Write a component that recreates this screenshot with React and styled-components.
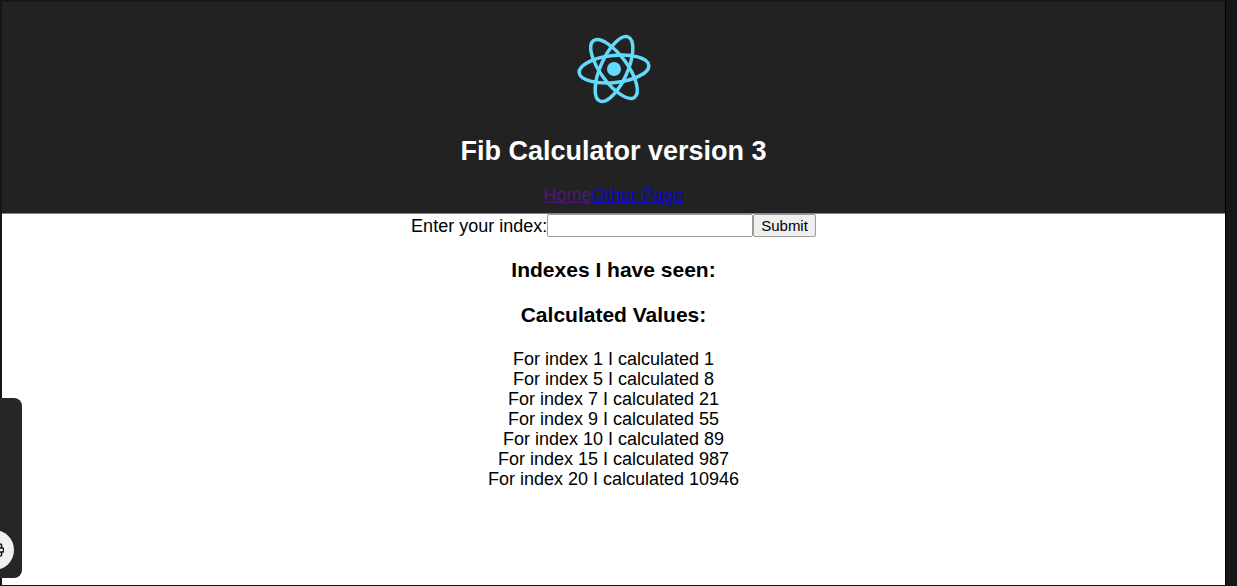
import React, { useState } from 'react';
import styled, { createGlobalStyle } from 'styled-components';

const GlobalStyle = createGlobalStyle`
  *, *::before, *::after { box-sizing: border-box; }
  body {
    margin: 0;
    font-family: "Liberation Sans", Arial, sans-serif;
    font-size: 18px;
    line-height: 20px;
    color: #000;
  }
`;

const Frame = styled.div`
  display: flex;
  min-height: 100vh;
  padding: 2px 11px 1px 2px;
  background: #161616;
`;

const Page = styled.div`
  flex: 1;
  border-right: 1px solid #000;
  background: #fff;
  text-align: center;
`;

const Header = styled.header`
  display: flex;
  flex-direction: column;
  align-items: center;
  padding: 22px 22px 8px;
  border-bottom: 1px solid #8a8088;
  background: #222;
  color: #fff;
`;

const Logo = styled.svg`
  width: 90px;
  height: 90px;
`;

const Title = styled.h1`
  margin: 20px 0 17px;
  font-size: 27px;
  line-height: 34px;
`;

const Nav = styled.nav`
  display: flex;
`;

const NavLink = styled.a`
  color: ${({ $seen }) => ($seen ? '#4b1a79' : '#0b06cf')};
  text-decoration: underline;
`;

const IndexForm = styled.form`
  display: flex;
  justify-content: center;
  align-items: center;
`;

const IndexInput = styled.input`
  width: 206px;
  height: 23px;
  padding: 1px 2px;
  border: 1px solid #9a9a9a;
  border-radius: 2px;
  background: #fff;
  font: inherit;
  font-size: 15px;
`;

const SubmitButton = styled.button`
  height: 23px;
  padding: 0 7px;
  border: 1px solid #9a9a9a;
  border-radius: 2px;
  background: #efefef;
  color: #000;
  font: inherit;
  font-size: 15px;
`;

const SectionTitle = styled.h3`
  margin: 21px 0;
  font-size: 21px;
  line-height: 24px;
`;

const Values = styled.div`
  padding: 1px 0 20px;
`;

const Dock = styled.aside`
  position: fixed;
  left: 0;
  bottom: 8px;
  display: flex;
  align-items: flex-end;
  width: 22px;
  height: 180px;
  padding-bottom: 8px;
  border-radius: 0 8px 8px 0;
  background: #262626;
  overflow: hidden;
`;

const DockButton = styled.button`
  flex: none;
  display: flex;
  align-items: center;
  justify-content: center;
  width: 40px;
  height: 40px;
  margin-left: -26px;
  padding: 0;
  border: 0;
  border-radius: 50%;
  background: #f1f1f1;
  color: #111;
`;

const results = [
  [1, 1],
  [5, 8],
  [7, 21],
  [9, 55],
  [10, 89],
  [15, 987],
  [20, 10946],
];

function ReactLogo() {
  return (
    <Logo viewBox="-45 -45 90 90" role="img" aria-label="React">
      <circle r="7" fill="#61dafb" />
      <g fill="none" stroke="#61dafb" strokeWidth="3.5">
        {[-6, 54, 114].map((angle) => (
          <ellipse key={angle} rx="35" ry="13.5" transform={`rotate(${angle})`} />
        ))}
      </g>
    </Logo>
  );
}

export default function App() {
  const [index, setIndex] = useState('');

  return (
    <>
      <GlobalStyle />
      <Frame>
        <Page>
          <Header>
            <ReactLogo />
            <Title>Fib Calculator version 3</Title>
            <Nav>
              <NavLink href="#home" $seen>Home</NavLink>
              <NavLink href="#other">Other Page</NavLink>
            </Nav>
          </Header>
          <main>
            <IndexForm onSubmit={(event) => event.preventDefault()}>
              <label htmlFor="index">Enter your index:</label>
              <IndexInput
                id="index"
                value={index}
                onChange={(event) => setIndex(event.target.value)}
              />
              <SubmitButton type="submit">Submit</SubmitButton>
            </IndexForm>
            <SectionTitle>Indexes I have seen:</SectionTitle>
            <SectionTitle>Calculated Values:</SectionTitle>
            <Values>
              {results.map(([n, value]) => (
                <div key={n}>{`For index ${n} I calculated ${value}`}</div>
              ))}
            </Values>
          </main>
        </Page>
        <Dock>
          <DockButton type="button" aria-label="Extensions">
            <svg width="20" height="20" viewBox="-10 -10 20 20" fill="none" stroke="currentColor" strokeWidth="1.500" strokeLinejoin="round">
              <path d="M0 -6H6C8.500 -6 8 -3 6.500 -2H8.500C10 -2 10 2 8.500 2H6.500C8 3 8.500 6 6 6H0H-6C-8.500 6 -8 3 -6.500 2H-8.500C-10 2 -10 -2 -8.500 -2H-6.500C-8 -3 -8.500 -6 -6 -6Z" />
            </svg>
          </DockButton>
        </Dock>
      </Frame>
    </>
  );
}
